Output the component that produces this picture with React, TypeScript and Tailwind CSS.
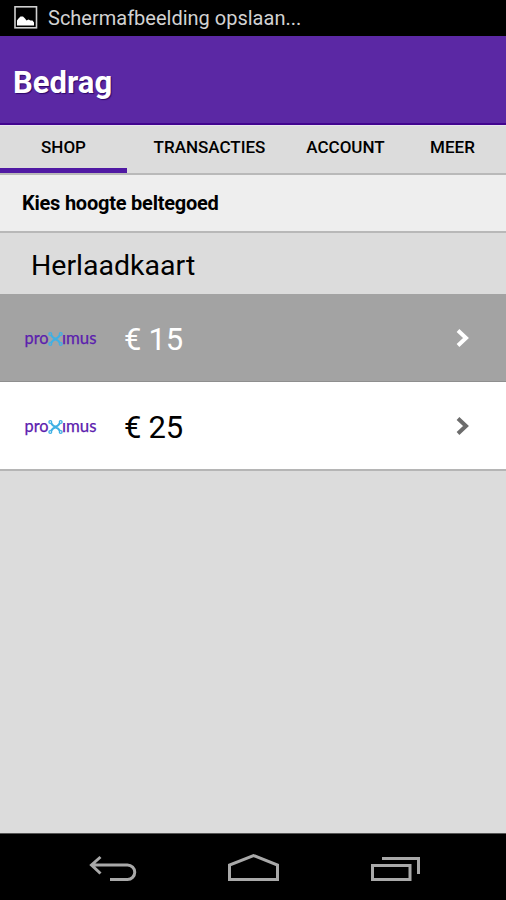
import React from 'react';

const TABS = [
  { label: 'SHOP', cell: 'w-[127px]', active: true },
  { label: 'TRANSACTIES', cell: 'w-[165px]', active: false },
  { label: 'ACCOUNT', cell: 'w-[107px]', active: false },
  { label: 'MEER', cell: 'w-[107px]', active: false },
];

const CARDS = [
  { amount: '€ 15', pressed: true },
  { amount: '€ 25', pressed: false },
];

const ProximusLogo: React.FC = () => (
  <svg className="h-10 w-[76px]" viewBox="0 0 76 40" aria-label="proximus">
    <g
      fill="#5b20ae"
      stroke="#5b20ae"
      strokeWidth="0.25"
      fontFamily="Lato, sans-serif"
      fontSize="17"
    >
      <text x="0.5" y="25.5" textLength="24" lengthAdjust="spacingAndGlyphs">
        pro
      </text>
      <text x="38" y="25.5" textLength="34.5" lengthAdjust="spacingAndGlyphs">
        ımus
      </text>
    </g>
    {/* knotted x */}
    <g fill="none" stroke="#3fb0e4">
      <path d="M27 17 Q31.5 24 36 17M27 25 Q31.5 18 36 25" strokeWidth="2.2" />
      <circle cx="26.3" cy="16" r="1.4" strokeWidth="1.3" />
      <circle cx="36.7" cy="16" r="1.4" strokeWidth="1.3" />
      <circle cx="26.3" cy="26" r="1.4" strokeWidth="1.3" />
      <circle cx="36.7" cy="26" r="1.4" strokeWidth="1.3" />
    </g>
  </svg>
);

const StatusBar: React.FC = () => (
  <div className="flex h-9 shrink-0 items-center bg-black pl-[14px] text-[#d2d2d2]">
    <svg className="h-6 w-6" viewBox="0 0 24 24">
      <rect x="1" y="0.8" width="21.5" height="21" fill="none" stroke="#d0d0d0" strokeWidth="1.6" />
      <path d="M3 19.5v-5l1.5-2 2-2H9l2 2 1.5 2 2-1 2 1h2l1.5 2v3z" fill="#fff" />
    </svg>
    <span className="ml-[10px] text-[20px] leading-none">Schermafbeelding opslaan...</span>
  </div>
);

const NavBar: React.FC = () => (
  <nav className="flex h-[67px] shrink-0 items-start justify-between border-t border-[#555] bg-black pt-[17px] pr-[86px] pl-[88px]">
    <svg className="h-8 w-[50px]" viewBox="0 0 50 32" fill="none" stroke="#a9a9a9" strokeWidth="3">
      <path d="M12.5 6 3.5 14l9 8.5M3.5 14H39.5a7 7 0 0 1 0 14.5H22" />
    </svg>
    <svg className="h-8 w-[54px]" viewBox="0 0 54 32" fill="none" stroke="#a9a9a9" strokeWidth="3">
      <path d="M2.5 28.5V14l24-9.5 24 9.5v14.5z" />
    </svg>
    <svg className="h-8 w-[50px]" viewBox="0 0 50 32" fill="none" stroke="#a9a9a9" strokeWidth="3">
      <path d="M2.5 14.5H40v14H2.5zM12 7.5h36.5V23" />
    </svg>
  </nav>
);

const App: React.FC = () => (
  <div className="flex h-[900px] w-[506px] flex-col overflow-hidden bg-[#dcdcdc] font-[Roboto,sans-serif] text-black">
    <StatusBar />

    <header className="flex h-[89px] shrink-0 items-center border-b-2 border-[#42058f] bg-[#5b28a4] pl-[13px]">
      <h1 className="pt-[5px] text-[31px] leading-none font-bold text-white [text-shadow:1px_1px_1px_#2c0868]">
        Bedrag
      </h1>
    </header>

    <div className="flex h-[50px] shrink-0 border-t border-b-2 border-t-[#e8e3ee] border-b-[#b9b9b9]">
      {TABS.map((tab) => (
        <div
          key={tab.label}
          className={`flex h-[47px] justify-center pt-[11px] text-[17px] leading-5 font-medium ${tab.cell} ${
            tab.active ? 'border-b-[5px] border-[#5019a3]' : ''
          }`}
        >
          {tab.label}
        </div>
      ))}
    </div>

    <div className="flex h-[58px] shrink-0 items-center border-b-2 border-[#b8b8b8] bg-[#eee] pl-[22px] text-[20px] font-bold tracking-[-0.23px]">
      Kies hoogte beltegoed
    </div>

    <h2 className="flex h-[61px] shrink-0 items-center pt-[6px] pl-[31px] text-[28.5px] leading-none">
      Herlaadkaart
    </h2>

    {CARDS.map((card) => (
      <div
        key={card.amount}
        className={`flex shrink-0 items-center pl-6 ${
          card.pressed
            ? 'h-[88px] border-b border-[#8f8f8f] bg-[#a3a3a3] text-white'
            : 'h-[89px] border-b-2 border-[#b5b5b5] bg-white'
        }`}
      >
        <ProximusLogo />
        <span className="ml-6 pt-[3px] text-[31px] leading-none tracking-[-0.3px]">
          {card.amount}
        </span>
        <svg
          className={`mr-[35px] ml-auto h-5 w-4 ${card.pressed ? 'text-white' : 'text-[#6c6c6c]'}`}
          viewBox="0 0 16 20"
          fill="none"
          stroke="currentColor"
          strokeWidth="4"
        >
          <path d="M3 2.5 11 10l-8 7.5" />
        </svg>
      </div>
    ))}

    <div className="flex-1" />
    <NavBar />
  </div>
);

export default App;
